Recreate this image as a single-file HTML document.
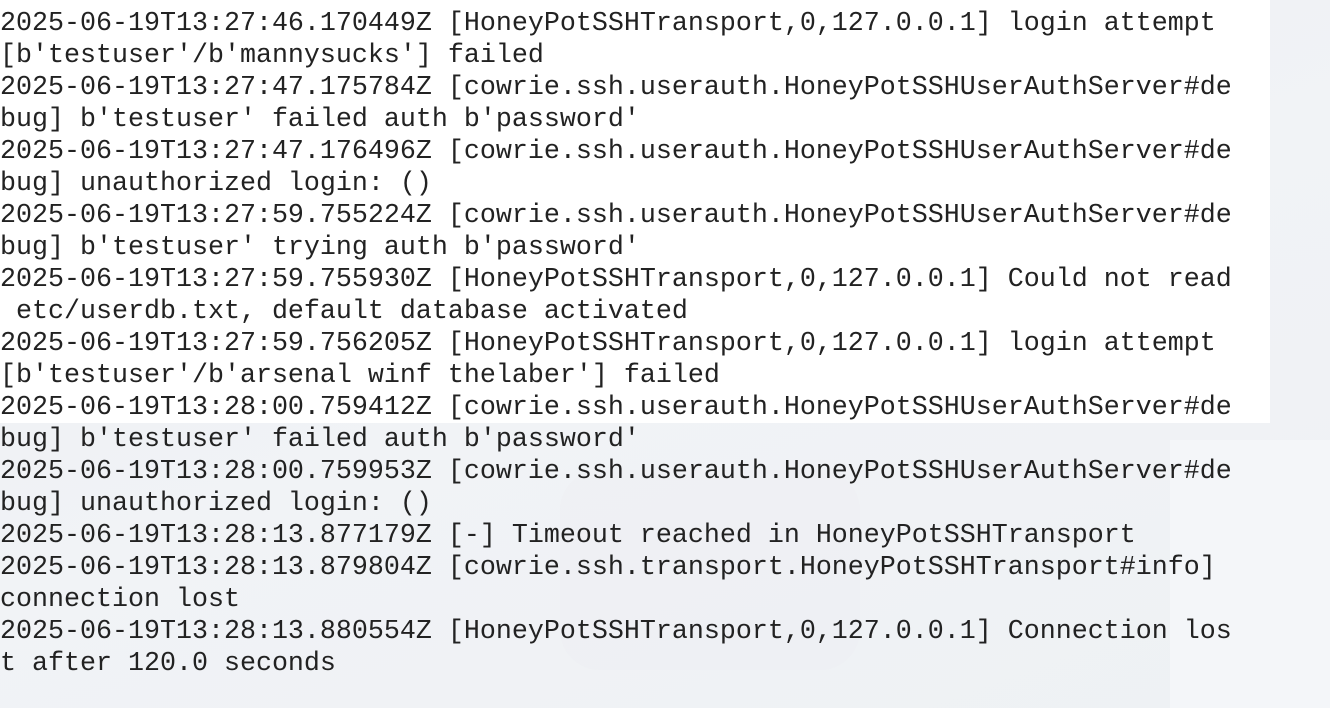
<!DOCTYPE html>
<html><head><meta charset="utf-8"><style>
html,body{margin:0;padding:0;width:1330px;height:708px;overflow:hidden;}
body{background:linear-gradient(160deg,#eceff2 0%,#f1f3f6 50%,#eef1f4 100%);position:relative;}
.panel{position:absolute;left:0;top:0;width:1270px;height:423px;background:#fff;}
.blob1{position:absolute;left:1170px;top:440px;width:160px;height:268px;background:#f4f6f9;}
.blob2{position:absolute;left:560px;top:470px;width:300px;height:200px;background:#eef0f3;border-radius:40px;opacity:.7}
pre{position:absolute;left:0;top:8px;margin:0;font-family:"Liberation Mono",monospace;font-size:26.67px;line-height:32px;color:#222;}
</style></head><body>
<div class="blob2"></div><div class="blob1"></div>
<div class="panel"></div>
<pre>2025-06-19T13:27:46.170449Z [HoneyPotSSHTransport,0,127.0.0.1] login attempt
[b'testuser'/b'mannysucks'] failed
2025-06-19T13:27:47.175784Z [cowrie.ssh.userauth.HoneyPotSSHUserAuthServer#de
bug] b'testuser' failed auth b'password'
2025-06-19T13:27:47.176496Z [cowrie.ssh.userauth.HoneyPotSSHUserAuthServer#de
bug] unauthorized login: ()
2025-06-19T13:27:59.755224Z [cowrie.ssh.userauth.HoneyPotSSHUserAuthServer#de
bug] b'testuser' trying auth b'password'
2025-06-19T13:27:59.755930Z [HoneyPotSSHTransport,0,127.0.0.1] Could not read
 etc/userdb.txt, default database activated
2025-06-19T13:27:59.756205Z [HoneyPotSSHTransport,0,127.0.0.1] login attempt
[b'testuser'/b'arsenal winf thelaber'] failed
2025-06-19T13:28:00.759412Z [cowrie.ssh.userauth.HoneyPotSSHUserAuthServer#de
bug] b'testuser' failed auth b'password'
2025-06-19T13:28:00.759953Z [cowrie.ssh.userauth.HoneyPotSSHUserAuthServer#de
bug] unauthorized login: ()
2025-06-19T13:28:13.877179Z [-] Timeout reached in HoneyPotSSHTransport
2025-06-19T13:28:13.879804Z [cowrie.ssh.transport.HoneyPotSSHTransport#info]
connection lost
2025-06-19T13:28:13.880554Z [HoneyPotSSHTransport,0,127.0.0.1] Connection los
t after 120.0 seconds</pre>
</body></html>
